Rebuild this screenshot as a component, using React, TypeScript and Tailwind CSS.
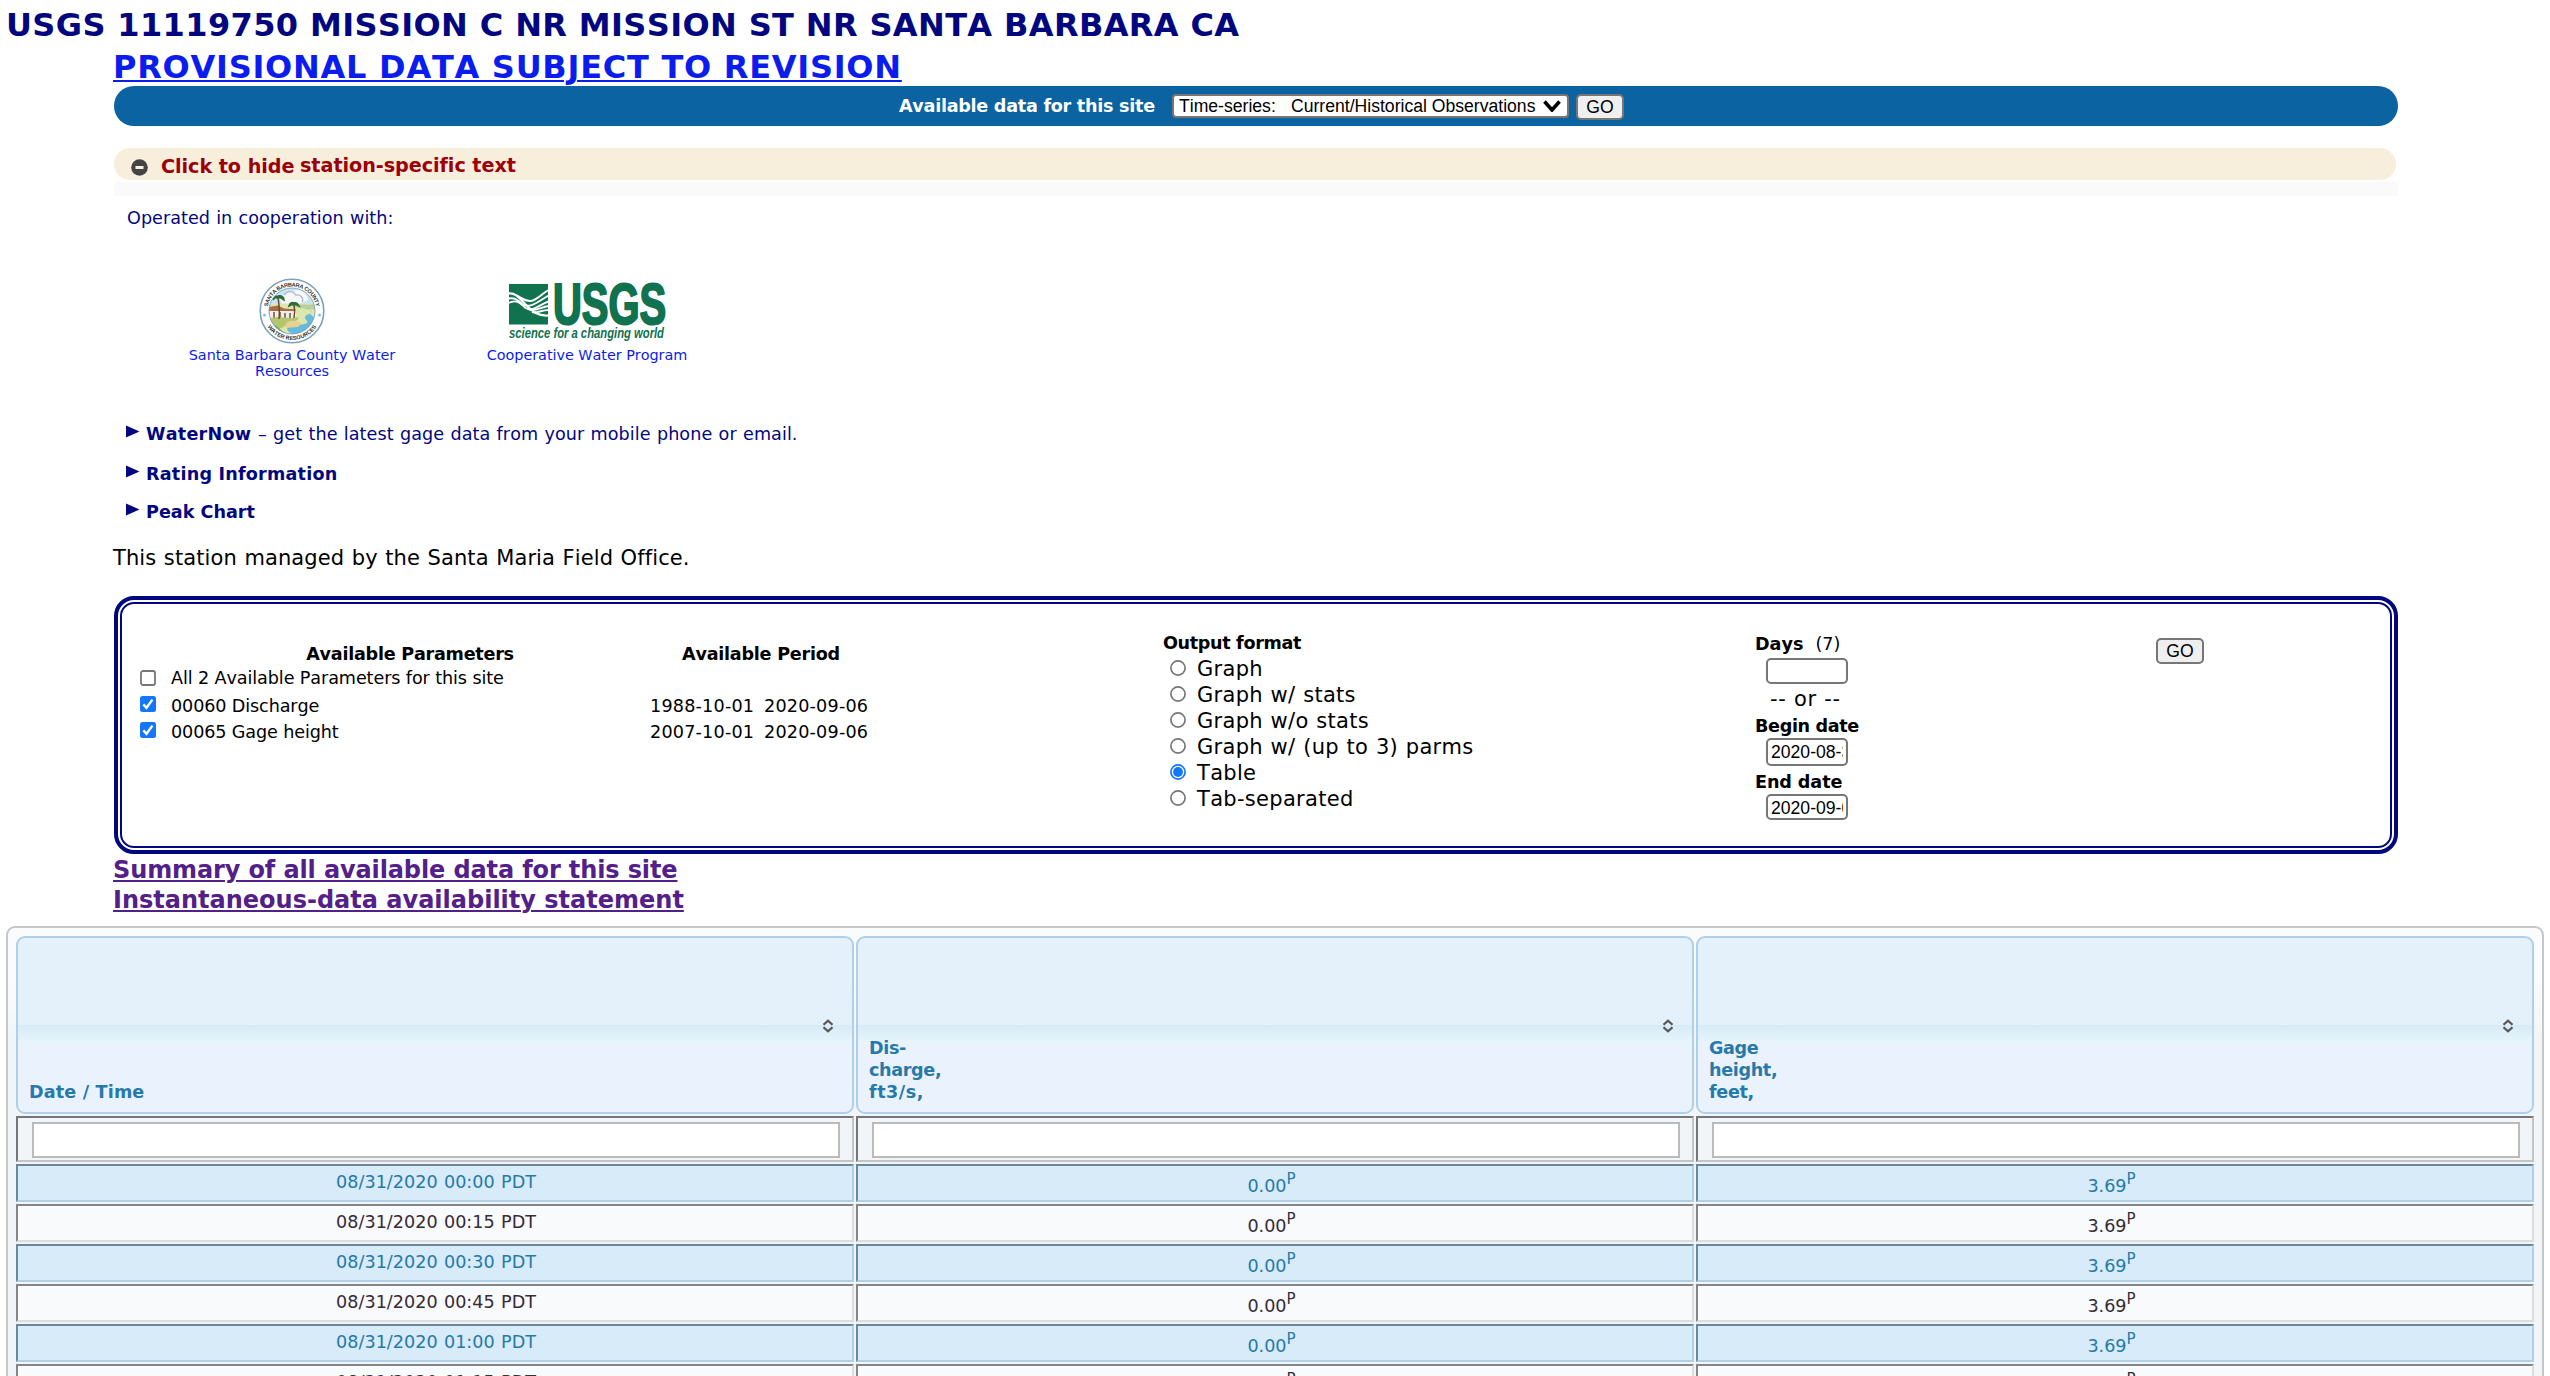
import React from "react";

const parameters = [
  { label: "00060 Discharge", from: "1988-10-01", to: "2020-09-06" },
  { label: "00065 Gage height", from: "2007-10-01", to: "2020-09-06" },
];

const formats = [
  "Graph",
  "Graph w/ stats",
  "Graph w/o stats",
  "Graph w/ (up to 3) parms",
  "Table",
  "Tab-separated",
];

const columns = [["Date / Time"], ["Dis-", "charge,", "ft3/s,"], ["Gage", "height,", "feet,"]];

const rows = ["00:00", "00:15", "00:30", "00:45", "01:00", "01:15"].map((t) => ({
  time: `08/31/2020 ${t} PDT`,
  discharge: "0.00",
  gage: "3.69",
}));

function Checkbox({ checked = false }: { checked?: boolean }) {
  return (
    <svg viewBox="0 0 16 16" className="block h-4 w-4 shrink-0">
      {checked ? (
        <>
          <rect width="16" height="16" rx="2.5" fill="#1277fb" />
          <path d="M3.4 8.4 6.5 11.8 12.4 3.6" fill="none" stroke="#fff" strokeWidth="2.4" />
        </>
      ) : (
        <rect x="1" y="1" width="14" height="14" rx="2" fill="#fff" stroke="#767676" strokeWidth="1.8" />
      )}
    </svg>
  );
}

function Radio({ checked = false }: { checked?: boolean }) {
  return (
    <svg viewBox="0 0 16 16" className="block h-4 w-4 shrink-0">
      <circle cx="8" cy="8" r="7.1" fill="#fff" stroke={checked ? "#1277fb" : "#767676"} strokeWidth="1.7" />
      {checked && <circle cx="8" cy="8" r="4.9" fill="#1277fb" />}
    </svg>
  );
}

function GoButton() {
  return (
    <button className="h-[26px] w-12 rounded-[5px] border-2 border-[#767676] bg-[#efefef] font-['Liberation_Sans',sans-serif] text-[17.6px] leading-[22px] text-black">
      GO
    </button>
  );
}

function Seal() {
  return (
    <svg viewBox="0 0 68 66" className="block h-[66px] w-[68px]">
      <defs>
        <path id="sealTop" d="M9.5 33a24.5 24.5 0 0 1 49 0" />
        <path id="sealBottom" d="M5 33a29 29 0 0 0 58 0" />
        <clipPath id="sealClip">
          <circle cx="34" cy="33" r="23" />
        </clipPath>
      </defs>
      <circle cx="34" cy="33" r="31.8" fill="#fff" stroke="#7ba3b9" strokeWidth="1.6" />
      <g clipPath="url(#sealClip)">
        <rect width="68" height="66" fill="#c8e3f2" />
        <path d="M22 22c4-9 9-9 13-8 6-5 14 0 15 8l-9 4H24z" fill="#f6f7fb" />
        <path d="M26 17c4-5 9-4 12 0 5-1 8 4 6 7" fill="none" stroke="#b3bac8" strokeWidth="1.4" />
        <path d="M10 27c16-3 34 0 48-2v34H10z" fill="#dce7ae" />
        <path d="M36 29c8-5 14 0 22-4v7z" fill="#b9cfa1" />
        <path d="M46 30c8 2 10 4 5 6s-5 4-2 7-8 4-16 5-2 7 2 8h18l6-14-7-6c3-3 1-5-6-6z" fill="#66b9df" />
        <path d="M12 29h9l5 3h12v8H12z" fill="#f4eee2" />
        <path d="M11 29l9-1.500 6 3 12 1-1 1.500H11z" fill="#a86c4b" />
        <path d="M16 34v6M22 34v6M27 35v5M32 35v5" stroke="#5f4632" strokeWidth="1.4" />
        <path d="M10 41c12-4 20 1 30-2 3 4-9 5-13 9-4 3-7 4-16 1z" fill="#b3c66e" />
        <path d="M28 45c4-4 12-2 16 0l-4 4-12 1z" fill="#e8cf92" />
        <path d="M12 46c8 0 11 8 18 11l-8 2z" fill="#7fa34c" />
        <path d="M21 41c1-8 0-15-1-22M36 40c1-5 1-8 0-13" fill="none" stroke="#6b4a30" strokeWidth="1.5" />
        <path d="M15 22c1-4 4-4 5-4 3-1 6 1 6 4-3-2-4-3-6-2-2-1-4 0-5 2zM31 28c1-3 3-4 5-3 3-1 4 1 5 3-2-1-3-2-5-1-2-1-3 0-5 1z" fill="#2f6b35" stroke="#2f6b35" strokeWidth="1.6" />
      </g>
      <circle cx="34" cy="33" r="23" fill="none" stroke="#6d98ab" strokeWidth="0.8" />
      <text className="font-['Liberation_Sans',sans-serif] font-bold" fontSize="5.6" fill="#333" textLength="68" textAnchor="middle">
        <textPath href="#sealTop" startOffset="50%">SANTA BARBARA COUNTY</textPath>
      </text>
      <text className="font-['Liberation_Sans',sans-serif] font-bold" fontSize="5.6" fill="#333" textLength="58" textAnchor="middle">
        <textPath href="#sealBottom" startOffset="50%">WATER RESOURCES</textPath>
      </text>
      <circle cx="6.500" cy="37" r="1.500" fill="#7fc2e8" />
      <circle cx="61.500" cy="37" r="1.500" fill="#7fc2e8" />
    </svg>
  );
}

function UsgsLogo() {
  return (
    <svg viewBox="0 0 160 62" className="block h-[62px] w-[160px]">
      <rect x="2" y="3" width="39" height="40.5" fill="#10724f" />
      <g fill="none" stroke="#fff" strokeWidth="1.9">
        <path d="M1.500 12.500c8-1 12 6 17 11 7 7 13 12 23 11" strokeWidth="2.2" />
        <path d="M10 14.500c7 4 8 5.500 13 5.500 6 0 10-6 18.500-11" />
        <path d="M1.500 17.500c7-1 10 2 14 6 8 4 14-2 26-9" />
        <path d="M1.500 22c8-4 12 0 17 5 8 4 13-3 23-6.500" />
        <path d="M20 27c5 5 12 0 21.500-2" />
        <path d="M25 31c4 2 9-2 16.500-2" />
      </g>
      <text x="46" y="43" className="font-['Liberation_Sans',sans-serif] font-bold" fontSize="57" fill="#10724f" stroke="#10724f" strokeWidth="2.200" textLength="113" lengthAdjust="spacingAndGlyphs">
        USGS
      </text>
      <text x="2" y="56.500" className="font-['Liberation_Sans',sans-serif] font-bold italic" fontSize="14.400" fill="#10724f" textLength="155" lengthAdjust="spacingAndGlyphs">
        science for a changing world
      </text>
    </svg>
  );
}

function Disclosure({ children }: { children: React.ReactNode }) {
  return (
    <div className="flex h-10 items-center text-[17.6px] text-[#020780]">
      <svg viewBox="0 0 14 14" className="mr-1.5 mb-1 h-3.5 w-3.5">
        <path d="M0 0.500 13.500 6.500 0 12.500z" fill="#020780" />
      </svg>
      <div>{children}</div>
    </div>
  );
}

function DateInput({ value, className }: { value: string; className: string }) {
  return (
    <div className={`ml-[11px] w-[82px] overflow-hidden rounded-[5px] border-2 border-[#767676] bg-white px-[3px] font-['Liberation_Sans',sans-serif] text-[17.6px] whitespace-nowrap ${className}`}>
      <div className="overflow-hidden">{value}</div>
    </div>
  );
}

function SortIcon() {
  return (
    <svg viewBox="0 0 12 14" className="h-3.5 w-3">
      <path d="M1.500 5.800 6 1.800l4.500 4M1.500 8.200l4.500 4 4.500-4" fill="none" stroke="#555" strokeWidth="2.200" />
    </svg>
  );
}

export default function App() {
  return (
    <div className="h-[1376px] w-[2550px] overflow-hidden bg-white font-['DejaVu_Sans',sans-serif] text-black [font-kerning:none]">
      <h1 className="h-[50px] pl-[6px] text-[32px] leading-[50px] font-bold tracking-[0.37px] whitespace-nowrap text-[#020780]">
        USGS 11119750 MISSION C NR MISSION ST NR SANTA BARBARA CA
      </h1>
      <div className="ml-[114px] w-[2284px]">
        <div className="-ml-px h-9 text-[32px] leading-[34px] font-bold tracking-[0.74px] whitespace-nowrap text-[#0a1dee]">
          <a className="underline decoration-2 underline-offset-2">PROVISIONAL DATA SUBJECT TO REVISION</a>
        </div>

        <div className="flex h-10 items-start rounded-[20px] bg-[#0b63a2] pt-2 pl-[785px]">
          <div className="w-[273px] text-[17.6px] leading-6 font-bold tracking-[-0.27px] whitespace-nowrap text-white">Available data for this site</div>
          <div className="mr-[7px] flex h-6 w-[397px] items-center rounded-[4px] border-2 border-[#767676] bg-white pl-[5px] font-['Liberation_Sans',sans-serif] text-[17.6px] leading-5 whitespace-nowrap">
            <span className="w-[112px]">Time-series:</span>
            <span className="w-[252px]">Current/Historical Observations</span>
            <svg viewBox="0 0 18 12" className="h-3 w-[18px]">
              <path d="M1.500 1.500 9 10l7.500-8.500" fill="none" stroke="#000" strokeWidth="3.600" />
            </svg>
          </div>
          <GoButton />
        </div>

        <div className="mt-[22px] flex h-8 w-[2282px] items-center rounded-[16px] bg-[#f7eedc] pl-[17px] text-[19.2px] font-bold whitespace-nowrap text-[#9b0008]">
          <svg viewBox="0 0 17 17" className="mt-1.5 mr-[13px] h-[17px] w-[17px]">
            <circle cx="8.500" cy="8.500" r="8.300" fill="#444" />
            <rect x="4.500" y="7" width="8" height="3" fill="#f7eedc" />
          </svg>
          <span className="mt-[7px] w-[139px] tracking-[-0.05px]">Click to hide</span>
          <span className="mt-[4px] tracking-[-0.05px]">station-specific text</span>
        </div>
        <div className="mt-0.5 h-3.5 bg-[#fafafa]" />

        <div className="mt-[10px] pl-[13px] text-[17.6px] leading-6 tracking-[0.03px] [word-spacing:0.034em] text-[#020780]">Operated in cooperation with:</div>

        <div className="mt-[48px] flex h-[129px] pl-[58px] text-center text-[14.4px] leading-4 tracking-[-0.03px] text-[#0a1dee]">
          <div className="flex w-60 flex-col items-center">
            <Seal />
            <div className="mt-[3px] w-[230px]">Santa Barbara County Water Resources</div>
          </div>
          <div className="ml-[55px] flex w-60 flex-col items-center">
            <div className="mt-[3px]">
              <UsgsLogo />
            </div>
            <div className="mt-1">Cooperative Water Program</div>
          </div>
        </div>

        <div className="mt-[7px] pl-3">
          <Disclosure>
            <b className="mr-px tracking-[0.25px]">WaterNow</b> <span className="tracking-[0.07px] [word-spacing:0.034em]">– get the latest gage data from your mobile phone or email.</span>
          </Disclosure>
          <Disclosure>
            <b className="tracking-[0.2px]">Rating Information</b>
          </Disclosure>
          <div className="-mt-0.5">
            <Disclosure>
              <b>Peak Chart</b>
            </Disclosure>
          </div>
        </div>

        <div className="mt-1 -ml-px h-[60px] text-[21px] leading-[45px] tracking-[0.11px] [word-spacing:0.034em]">This station managed by the Santa Maria Field Office.</div>

        <div className="h-[258px] rounded-[20px] border-4 border-[#020780] p-0.5">
          <div className="flex h-full rounded-[14px] border-2 border-[#020780] pl-[18px] text-[17.6px]">
            <div className="w-[1023px] pt-[38px]">
              <div className="flex h-6 leading-6 font-bold tracking-[-0.25px]">
                <div className="w-[540px] text-center">Available Parameters</div>
                <div className="w-[162px] text-center whitespace-nowrap">Available Period</div>
              </div>
              <div className="flex h-6 items-center tracking-[-0.1px]">
                <Checkbox />
                <span className="ml-[15px]">All 2 Available Parameters for this site</span>
              </div>
              <div className="mt-1">
                {parameters.map((p) => (
                  <div key={p.label} className="flex h-[26px] items-start">
                    <div className="mt-0.5">
                      <Checkbox checked />
                    </div>
                    <span className="ml-[15px] w-[479px] leading-6 tracking-[-0.12px]">{p.label}</span>
                    <span className="w-[114px] leading-6 tracking-[0.2px]">{p.from}</span>
                    <span className="leading-6 tracking-[0.2px]">{p.to}</span>
                  </div>
                ))}
              </div>
            </div>

            <div className="w-[592px] pt-[26px]">
              <div className="leading-[27px] font-bold tracking-[-0.35px]">Output format</div>
              {formats.map((f) => (
                <div key={f} className="flex h-[26px] items-center pl-[7px] text-[21px] leading-[26px]">
                  <div className="mb-1">
                    <Radio checked={f === "Table"} />
                  </div>
                  <span className="mb-0.5 ml-[11px] tracking-[0.3px] [word-spacing:0.034em]">{f}</span>
                </div>
              ))}
            </div>

            <div className="w-[401px] pt-[28px]">
              <div className="h-[26px] leading-6">
                <b>Days</b>
                <span className="ml-[12px]">(7)</span>
              </div>
              <DateInput value="" className="h-[26px]" />
              <div className="ml-[15px] h-[30px] text-[21px] leading-[30px] tracking-[0.7px]">-- or --</div>
              <div className="h-6 leading-6 font-bold tracking-[-0.35px]">Begin date</div>
              <DateInput value="2020-08-31" className="h-7 leading-6" />
              <div className="h-7 leading-[32px] font-bold tracking-[-0.1px]">End date</div>
              <DateInput value="2020-09-06" className="h-[26px] leading-6" />
            </div>

            <div className="pt-[34px]">
              <GoButton />
            </div>
          </div>
        </div>

        <div className="-ml-px h-[72px] pt-px text-[24px] leading-[30px] font-bold text-[#53208a]">
          <div className="tracking-[-0.12px]">
            <a className="underline decoration-2 underline-offset-2">Summary of all available data for this site</a>
          </div>
          <div>
            <a className="underline decoration-2 underline-offset-2">Instantaneous-data availability statement</a>
          </div>
        </div>
      </div>

      <div className="ml-1.5 h-[500px] w-[2538px] rounded-[9px] border-2 border-[#c4c6c8] bg-[linear-gradient(#fafbfc_0,#fafbfc_55px,#f2f5f7_110px)] px-2 pt-2">
        <div className="grid grid-cols-3 gap-0.5">
          {columns.map((lines, i) => (
            <div key={i} className="relative flex h-[178px] flex-col justify-end rounded-[9px] border-2 border-[#aed0ea] bg-[linear-gradient(#e4f1fa_0,#e4f1fa_87px,#d7ebf7_87px,#e8f5fb_105px,#eaf3fd_107px,#eaf3fd_100%)] pb-[9px] pl-[11px] text-[17.6px] leading-[22px] font-bold text-[#2779aa]">
              {lines.map((l) => (
                <div key={l} className={l === "ft3/s," ? "tracking-[0.5px]" : i === 0 ? "tracking-[0.15px]" : "tracking-[-0.35px]"}>
                  {l}
                </div>
              ))}
              <div className="absolute top-[81px] right-[18px]">
                <SortIcon />
              </div>
            </div>
          ))}
          {columns.map((_, i) => (
            <div key={i} className="h-[46px] border-2 border-t-[#767676] border-r-[#c4c4c4] border-b-[#c4c4c4] border-l-[#767676] bg-[#f2f5f7] pt-1 pr-3 pl-[14px]">
              <div className="h-9 border-2 border-[#bbbbbb] bg-white" />
            </div>
          ))}
          {rows.map((r, i) => {
            const cell =
              i % 2 === 0
                ? "h-[38px] border-2 text-center border-t-[#6b8799] border-l-[#6b8799] border-r-[#aed0ea] border-b-[#aed0ea] bg-[#d7ebf9] text-[#2779aa]"
                : "h-[38px] border-2 text-center border-t-[#858585] border-l-[#858585] border-r-[#dddddd] border-b-[#dddddd] bg-[#f9fafc] text-[#362b36]";
            return (
              <React.Fragment key={r.time}>
                <div className={`${cell} pl-0.5 text-[17.6px] leading-8 tracking-[0.03px] [word-spacing:0.034em]`}>{r.time}</div>
                {[r.discharge, r.gage].map((v, k) => (
                  <div key={k} className={`${cell} flex justify-center pr-[7px] text-[17.6px]`}>
                    <span className="leading-10">{v}</span>
                    <span className="text-[15px] leading-[26px]">P</span>
                  </div>
                ))}
              </React.Fragment>
            );
          })}
        </div>
      </div>
    </div>
  );
}
